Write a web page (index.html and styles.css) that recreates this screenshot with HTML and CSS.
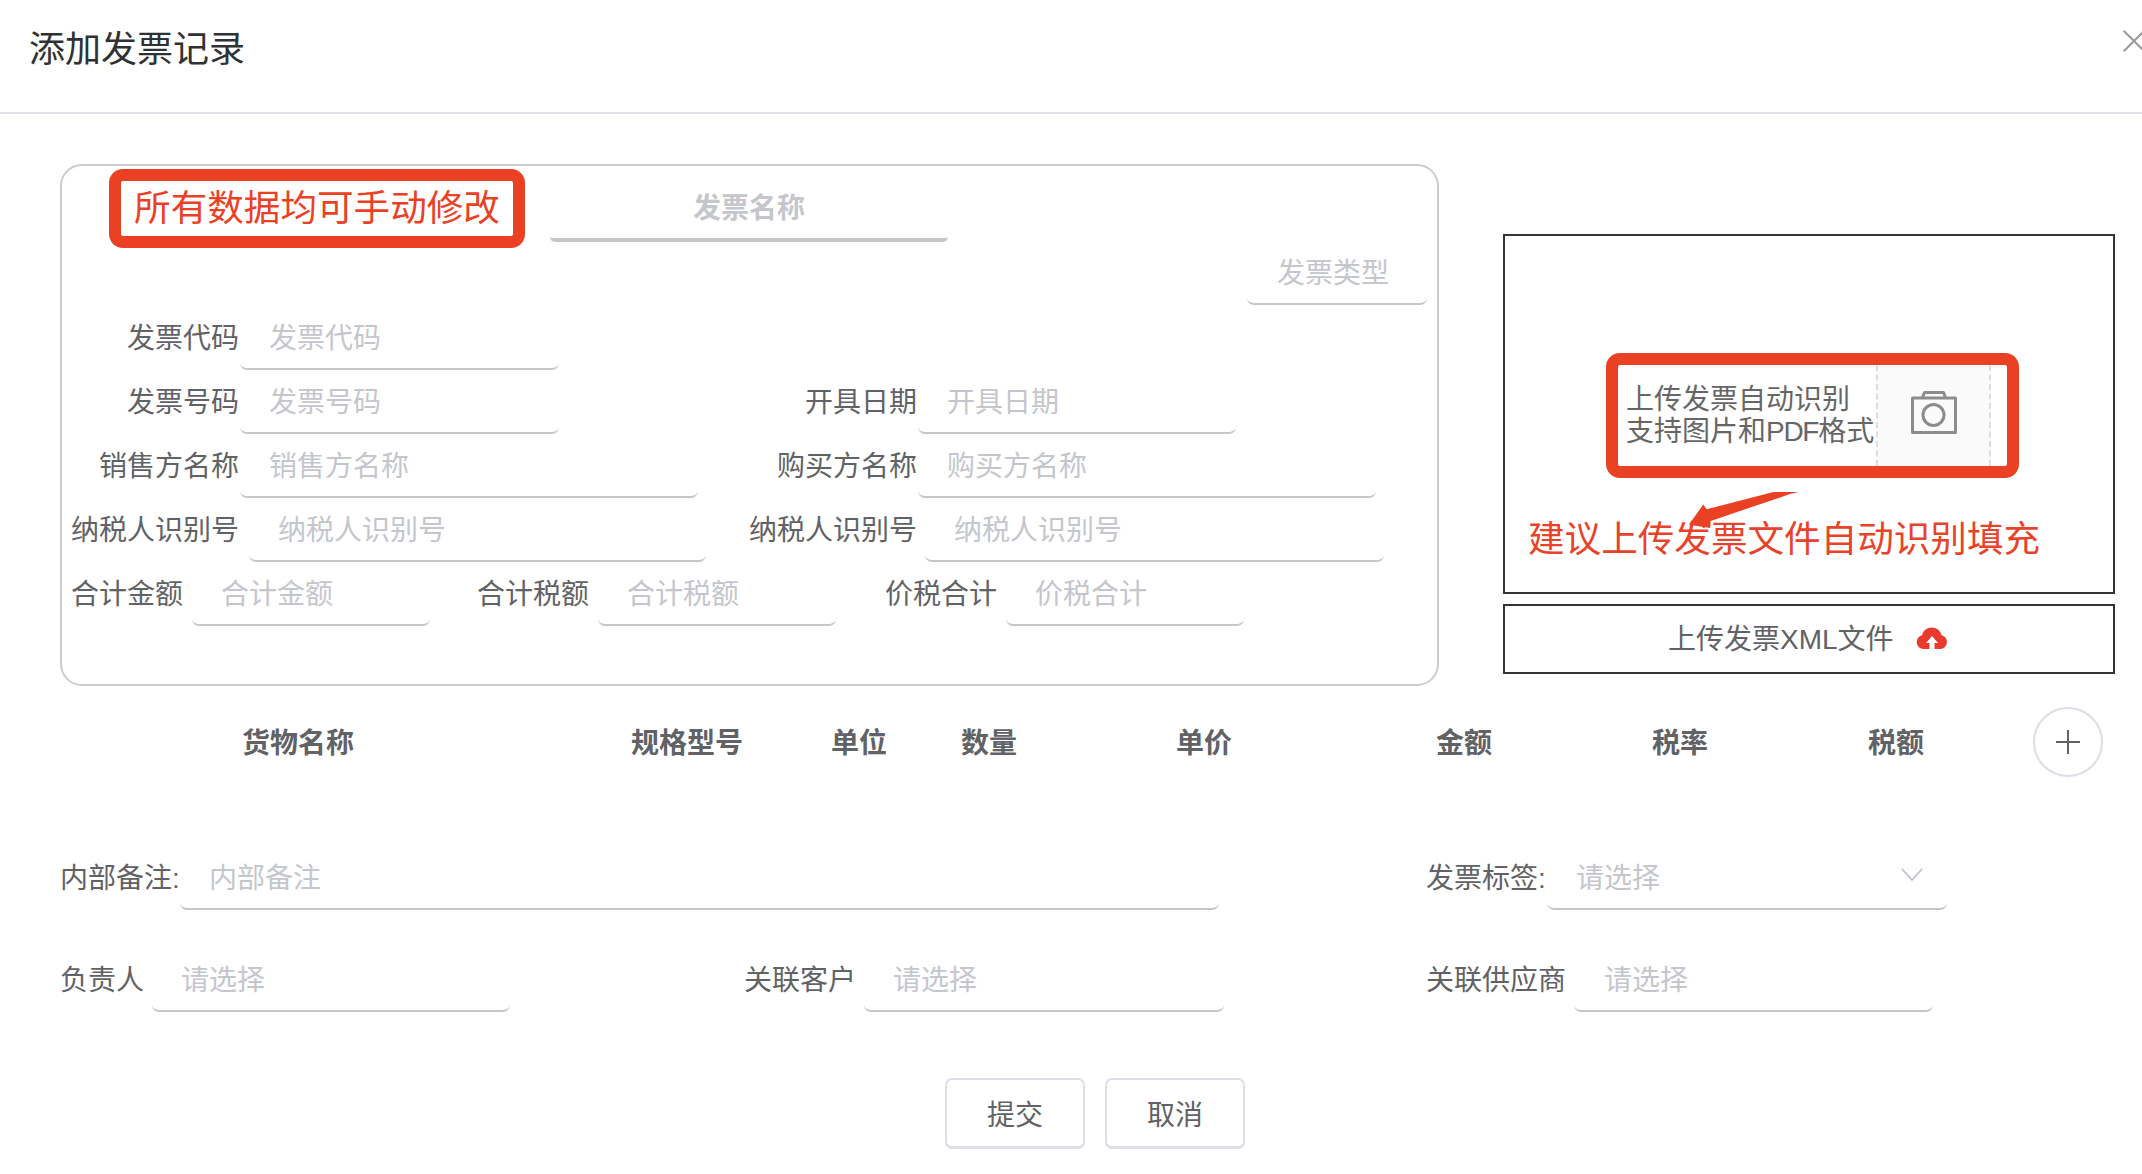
FILE: index.html
```html
<!DOCTYPE html>
<html lang="zh-CN">
<head>
<meta charset="utf-8">
<title>添加发票记录</title>
<link rel="stylesheet" href="styles.css">
</head>
<body>
<div class="dialog">
  <header class="dialog-header">
    <h1 class="dialog-title">添加发票记录</h1>
    <svg class="close-icon" width="22" height="22" viewBox="0 0 22 22"><path d="M0.7 0.7 L21.3 21.3 M21.3 0.7 L0.7 21.3" fill="none" stroke="#9a9a9a" stroke-width="2"/></svg>
  </header>

  <main class="main-row">
    <section class="invoice-card">
      <div class="note-box">所有数据均可手动修改</div>
      <div class="title-row"><div class="input input-title"><span class="ph">发票名称</span></div></div>
      <div class="type-row"><div class="input input-type"><span class="ph">发票类型</span></div></div>
      <div class="rows">
        <div class="row">
          <label class="lbl lbl-wide">发票代码</label><div class="input input-code"><span class="ph">发票代码</span></div>
        </div>
        <div class="row">
          <label class="lbl lbl-wide">发票号码</label><div class="input input-code"><span class="ph">发票号码</span></div>
          <label class="lbl lbl-wide lbl-date">开具日期</label><div class="input input-date"><span class="ph">开具日期</span></div>
        </div>
        <div class="row">
          <label class="lbl lbl-wide">销售方名称</label><div class="input input-name"><span class="ph">销售方名称</span></div>
          <label class="lbl lbl-wide lbl-buyer">购买方名称</label><div class="input input-name-r"><span class="ph">购买方名称</span></div>
        </div>
        <div class="row">
          <label class="lbl lbl-wide">纳税人识别号</label><div class="input input-tax"><span class="ph">纳税人识别号</span></div>
          <label class="lbl lbl-wide lbl-tax-r">纳税人识别号</label><div class="input input-tax-r"><span class="ph">纳税人识别号</span></div>
        </div>
        <div class="row row-sum">
          <label class="lbl">合计金额</label><div class="input input-sum"><span class="ph">合计金额</span></div>
          <label class="lbl">合计税额</label><div class="input input-sum"><span class="ph">合计税额</span></div>
          <label class="lbl lbl-total">价税合计</label><div class="input input-sum"><span class="ph">价税合计</span></div>
        </div>
      </div>
    </section>

    <aside class="upload-col">
      <div class="upload-box">
        <div class="upload-note">
          <div class="upload-text">上传发票自动识别<br>支持图片和<span class="latin-tight">PDF</span>格式</div>
          <div class="upload-btn">
            <svg width="46" height="43" viewBox="0 0 46 43"><path d="M11.5 6.5 L13.5 1.5 H32.5 L34.5 6.5 M1.5 7 H44.5 V41.5 H1.5 Z" fill="none" stroke="#8c8c8c" stroke-width="3" stroke-linejoin="round"/><circle cx="22.5" cy="24" r="10.5" fill="none" stroke="#8c8c8c" stroke-width="3"/></svg>
          </div>
        </div>
        <svg class="hint-arrow" width="114" height="40" viewBox="0 0 114 40"><path d="M0 28 L16 9 L19 14 L103 0 L111 3 L104 4 L112 5 L104 6 L22 26 L21 33 Z" fill="#ea4125" transform="rotate(-5 56 20)"/></svg>
        <div class="upload-hint">建议上传发票文件自动识别填充</div>
      </div>
      <div class="xml-box">
        <span>上传发票XML文件</span>
        <svg class="cloud" width="32" height="24" viewBox="0 0 32 24"><path d="M7.5 24 A7 7 0 0 1 6 10.2 A10 10 0 0 1 25.5 10.2 A7 7 0 0 1 24.5 24 Z" fill="#ea3a2d"/><path d="M16 11 L22 18 H18.5 V24 H13.5 V18 H10 Z" fill="#fff"/></svg>
      </div>
    </aside>
  </main>

  <div class="table-head">
    <div class="head-cols">
      <span>货物名称</span><span>规格型号</span><span>单位</span><span>数量</span><span>单价</span><span>金额</span><span>税率</span><span>税额</span>
    </div>
    <button class="add-btn" type="button" aria-label="添加">
      <svg width="24" height="24" viewBox="0 0 24 24"><path d="M12 0 V24 M0 12 H24" fill="none" stroke="#606266" stroke-width="2"/></svg>
    </button>
  </div>

  <div class="extra-form">
    <div class="field field-span">
      <label class="lbl lbl-remark">内部备注:</label><div class="input input-remark"><span class="ph">内部备注</span></div>
    </div>
    <div class="field">
      <label class="lbl lbl-tag">发票标签:</label>
      <div class="input input-tag"><span class="ph">请选择</span>
        <svg class="chevron" width="22" height="13" viewBox="0 0 22 13"><path d="M1 1 L11 12 L21 1" fill="none" stroke="#b9bcc2" stroke-width="1.6"/></svg>
      </div>
    </div>
    <div class="field field-owner">
      <label class="lbl">负责人</label><div class="input input-owner"><span class="ph">请选择</span></div>
    </div>
    <div class="field field-owner">
      <label class="lbl">关联客户</label><div class="input input-customer"><span class="ph">请选择</span></div>
    </div>
    <div class="field field-owner">
      <label class="lbl">关联供应商</label><div class="input input-supplier"><span class="ph">请选择</span></div>
    </div>
  </div>

  <div class="actions">
    <button class="btn" type="button">提交</button>
    <button class="btn" type="button">取消</button>
  </div>
</div>
</body>
</html>
```
FILE: styles.css
```css
* { box-sizing: border-box; }
html, body { margin: 0; padding: 0; background: #fff; }
body {
  width: 2142px;
  height: 1174px;
  overflow: hidden;
  font-family: "Liberation Sans", "Noto Sans CJK SC", sans-serif;
  font-size: 28px;
  color: #606266;
}
.dialog { width: 2142px; }

.dialog-header {
  position: relative;
  height: 114px;
  border-bottom: 2px solid #dfe1e6;
  padding: 0 0 0 29px;
}
.dialog-title {
  margin: 0;
  padding-top: 25px;
  font-size: 36px;
  line-height: 50px;
  font-weight: 400;
  color: #303133;
}
.close-icon { position: absolute; left: 2123px; top: 30px; }

.main-row {
  display: flex;
  align-items: flex-start;
  gap: 64px;
  padding: 50px 0 0 60px;
}

.invoice-card {
  position: relative;
  width: 1379px;
  height: 522px;
  border: 2px solid #ccc;
  border-radius: 22px;
}
.note-box {
  position: absolute;
  left: 47px;
  top: 3px;
  width: 416px;
  height: 79px;
  border: 12px solid #ea4125;
  border-radius: 14px;
  background: #fff;
  color: #ea4125;
  font-size: 36.6px;
  line-height: 56px;
  text-align: center;
  white-space: nowrap;
}

.input {
  position: relative;
  height: 60px;
  border-bottom: 2px solid #c6c7cb;
  border-radius: 0 0 7px 7px;
  padding-left: 29px;
  line-height: 58px;
  flex: none;
}
.ph { color: #c4c6cc; }

.title-row { padding: 16px 0 0 488px; }
.input-title {
  width: 398px;
  border-bottom-width: 4px;
  border-radius: 0 0 5px 5px;
  padding: 0;
  line-height: 53px;
  text-align: center;
}
.input-title .ph { font-weight: 700; }
.type-row { display: flex; justify-content: flex-end; padding: 3px 10px 0 0; }
.input-type { width: 180px; padding-left: 30px; }

.rows { display: flex; flex-direction: column; gap: 4px; margin-top: 5px; padding-left: 9px; }
.row { display: flex; align-items: flex-start; }
.lbl { flex: none; line-height: 58px; white-space: nowrap; }
.lbl-wide { width: 168px; text-align: right; margin-right: 1px; }

.input-code { width: 319px; }
.lbl-date { margin-left: 190px; margin-right: 1px; }
.input-date { width: 318px; }
.input-name { width: 458px; }
.lbl-buyer { margin-left: 51px; margin-right: 1px; }
.input-name-r { width: 458px; }
.input-tax { width: 457px; margin-left: 9px; }
.lbl-tax-r { margin-left: 43px; margin-right: 8px; }
.input-tax-r { width: 459px; }

.row-sum .lbl { margin-right: 9px; }
.row-sum .lbl-total { margin-left: 2px; }
.input-sum { width: 238px; margin-right: 47px; }

.upload-col { width: 612px; padding-top: 70px; display: flex; flex-direction: column; gap: 10px; }
.upload-box {
  position: relative;
  height: 360px;
  border: 2px solid #333;
  padding: 117px 0 0 0;
}
.upload-note {
  display: flex;
  margin-left: 101px;
  width: 413px;
  height: 125px;
  border: 12px solid #ea4125;
  border-radius: 14px;
  background: #fff;
  padding-right: 16px;
}
.upload-text {
  width: 258px;
  padding: 19px 0 0 8px;
  line-height: 32px;
  white-space: nowrap;
  color: #666;
}
.latin-tight { letter-spacing: -1.3px; }
.upload-btn {
  flex: 1;
  display: flex;
  align-items: flex-start;
  justify-content: center;
  padding: 26px 0 0 0;
  background: #fafafa;
  border-left: 2px dashed #ddd;
  border-right: 2px dashed #ddd;
}
.hint-arrow { position: absolute; left: 183px; top: 256px; z-index: 1; }
.upload-hint {
  margin: 40px 0 0 23px;
  font-size: 36.6px;
  line-height: 44px;
  color: #e8432a;
  white-space: nowrap;
}
.xml-box {
  height: 70px;
  border: 2px solid #333;
  display: flex;
  align-items: center;
  gap: 22px;
  padding-left: 163px;
  line-height: 64px;
}
.xml-box span { padding-top: 2px; }
.cloud { flex: none; margin-top: -4px; }

.table-head { display: flex; align-items: center; margin-top: 21px; padding: 0 39px 0 242px; }
.head-cols {
  display: grid;
  grid-template-columns: 389px 200px 130px 215px 260px 216px 216px auto;
  flex: 1;
  padding-top: 3px;
  font-weight: 700;
  line-height: 50px;
}
.add-btn {
  flex: none;
  width: 70px;
  height: 70px;
  padding: 0;
  border: 2px solid #dcdfe6;
  border-radius: 50%;
  background: #fff;
  display: flex;
  align-items: center;
  justify-content: center;
}

.extra-form {
  display: grid;
  grid-template-columns: 684px 682px auto;
  row-gap: 42px;
  margin-top: 73px;
  padding-left: 60px;
}
.field { display: flex; align-items: flex-start; }
.field-span { grid-column: span 2; }
.lbl-remark { width: 120px; }
.input-remark { width: 1039px; }
.lbl-tag { width: 121px; }
.input-tag { width: 400px; }
.chevron { position: absolute; right: 24px; top: 18px; }
.field-owner .lbl { margin-right: 8px; }
.input-owner { width: 358px; }
.input-customer { width: 360px; }
.input-supplier { width: 359px; padding-left: 30px; }

.actions { display: flex; gap: 20px; margin-top: 66px; padding-left: 945px; }
.btn {
  width: 140px;
  height: 71px;
  padding: 0;
  border: 2px solid #dcdfe6;
  border-bottom-width: 3px;
  border-radius: 7px;
  background: #fff;
  font: inherit;
  color: #606266;
}
```
